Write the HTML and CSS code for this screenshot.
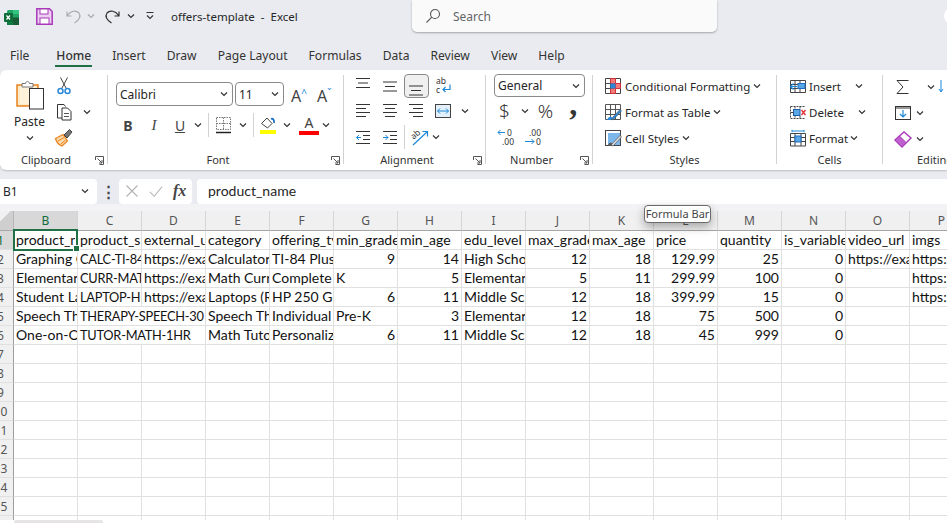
FILE: index.html
```html
<!DOCTYPE html>
<html lang="en">
<head>
    <meta charset="UTF-8">
    <meta name="viewport" content="width=device-width, initial-scale=1.0">
    <title>offers-template - Excel</title>
    <link rel="stylesheet" href="styles.css">
</head>
<body>
    <svg class="defs" aria-hidden="true">
        <symbol id="chev" viewBox="0 0 8 8"><path d="M1 2.500 4 5.500 7 2.500" fill="none" stroke="#333" stroke-width="1.200"/></symbol>
        <symbol id="launch" viewBox="0 0 9 9"><path d="M.5 4V.5H8.500V8.500H4.500M2.500 2.500 7 7M7 4V7H4" fill="none" stroke="#555"/></symbol>
    </svg>

    <!-- Title bar -->
    <header class="titlebar">
        <svg class="ic-excel" viewBox="0 0 15 15"><rect x="3" y="0" width="12" height="15" rx="1.500" fill="#21a366"/><rect x="9" y="0" width="6" height="4" fill="#33c481"/><rect x="9" y="7.500" width="6" height="7.500" fill="#185c37"/><rect x="3" y="8" width="6" height="7" fill="#107c41"/><rect x="0" y="3" width="9" height="9" rx="1" fill="#0f6b3a"/><path d="M2.500 5.500 6 9.500M6 5.500 2.500 9.500" stroke="#fff" stroke-width="1.200"/></svg>
        <svg class="ic-save" viewBox="0 0 17 17"><path d="M.8.8H13.500L16.200 3.500V16.200H.8Z" fill="#edcff2" stroke="#a83bb8" stroke-width="1.500"/><rect x="4" y="1" width="8" height="5" fill="#fff" stroke="#a83bb8"/><rect x="4" y="10" width="9" height="6" fill="#fff" stroke="#a83bb8"/></svg>
        <svg class="ic-undo" viewBox="0 0 16 16"><path d="M1 3.500V8H5.500M1.500 7.500C4 3 10 1.500 13 5 15.500 8.500 13 12 8.500 15" fill="none" stroke="#a9abb0" stroke-width="1.200"/></svg>
        <svg class="chev chev-off"><use href="#chev"/></svg>
        <svg class="ic-redo" viewBox="0 0 16 16"><path d="M15 3.500V8H10.500M14.500 7.500C12 3 6 1.500 3 5 .5 8.500 3 12 7.500 15" fill="none" stroke="#333" stroke-width="1.200"/></svg>
        <svg class="chev chev-redo"><use href="#chev"/></svg>
        <svg class="ic-qat" viewBox="0 0 10 10"><path d="M1.500 1.500H8.500M2 4.500 5 7.500 8 4.500" fill="none" stroke="#333" stroke-width="1.100"/></svg>
        <span class="doc-title">offers-template&nbsp; -&nbsp; Excel</span>
        <div class="search">
            <svg class="ic-search" viewBox="0 0 16 16"><circle cx="10" cy="6" r="4.500" fill="none" stroke="#555" stroke-width="1.100"/><path d="M6.800 9.200 1.500 14.500" stroke="#555" stroke-width="1.100"/></svg>
            <span>Search</span>
        </div>
        <span class="avatar"></span>
    </header>

    <!-- Tabs -->
    <nav class="tabs">
        <a href="#">File</a>
        <a href="#" class="active">Home</a>
        <a href="#">Insert</a>
        <a href="#">Draw</a>
        <a href="#">Page Layout</a>
        <a href="#">Formulas</a>
        <a href="#">Data</a>
        <a href="#">Review</a>
        <a href="#">View</a>
        <a href="#">Help</a>
    </nav>

    <!-- Ribbon -->
    <section class="ribbon">
        <div class="group clipboard">
            <div class="group-body clip-body">
                <div class="paste">
                    <svg class="ic-paste" viewBox="0 0 28 30"><path d="M1 5H22V26H1Z" fill="#fdebc8" stroke="#e8821e" stroke-width="1.500"/><path d="M4 6H19V24H4Z" fill="#fff3dc"/><path d="M6 7V3.500H9.500C10 .8 13 .8 13.500 3.500H17V7Z" fill="#fff" stroke="#777"/><rect x="13.500" y="8.500" width="14" height="20.500" fill="#fff" stroke="#333"/></svg>
                    <span>Paste</span>
                    <svg class="chev"><use href="#chev"/></svg>
                </div>
                <div class="mini">
                    <div class="row"><span class="t"><svg class="ic" viewBox="0 0 20 20"><path d="M6.500 1.500 12 12M13.500 1.500 8 12" stroke="#444" fill="none"/><circle cx="6.500" cy="15" r="2.500" fill="none" stroke="#2b88d8" stroke-width="1.500"/><circle cx="13.500" cy="15" r="2.500" fill="none" stroke="#2b88d8" stroke-width="1.500"/></svg></span></div>
                    <div class="row"><span class="t"><svg class="ic" viewBox="0 0 20 20"><path d="M8 16H3.500V2.500H10L11.500 4.500" fill="none" stroke="#333"/><path d="M8 6H13.500L17 9.500V18H8Z" fill="#fff" stroke="#333"/><path d="M10 11.500H15M10 14.500H15" stroke="#555"/></svg></span><svg class="chev chev-copy"><use href="#chev"/></svg></div>
                    <div class="row"><span class="t"><svg class="ic" viewBox="0 0 20 20"><path d="M1.500 10.500 9 6.500 13.500 13 8 18C5 17 2.500 14 1.500 10.500Z" fill="#fbd9a8" stroke="#e8821e" stroke-width="1.200"/><path d="M4 13 10 9.500M7 16 11.500 12" stroke="#e8821e"/><path d="M10 7 15.500 1.500 18 4 13 10Z" fill="#777" stroke="#444"/></svg></span></div>
                </div>
            </div>
            <div class="label launchable">Clipboard<svg class="launcher"><use href="#launch"/></svg></div>
        </div>
        <span class="sep"></span>

        <div class="group font">
            <div class="group-body font-body">
                <div class="row row-combo">
                    <div class="combo combo-font">Calibri<svg class="chev"><use href="#chev"/></svg></div>
                    <div class="combo combo-size">11<svg class="chev"><use href="#chev"/></svg></div>
                    <span class="grow">A<i>^</i></span>
                    <span class="grow shrink">A<i>ˇ</i></span>
                </div>
                <div class="row row-format">
                    <span class="t fmt bold">B</span>
                    <span class="t fmt italic">I</span>
                    <span class="t fmt under">U</span>
                    <svg class="chev chev-under"><use href="#chev"/></svg>
                    <span class="vsep"></span>
                    <span class="t"><svg class="ic" viewBox="0 0 20 20"><path d="M3.500 2.500H17.500V14.500H3.500ZM10.500 2.500V14.500M3.500 8.500H17.500" fill="none" stroke="#777" stroke-dasharray="1.500 1"/><path d="M3 17.500H18" stroke="#222" stroke-width="1.500"/></svg></span>
                    <svg class="chev chev-border"><use href="#chev"/></svg>
                    <span class="vsep vsep-fill"></span>
                    <span class="t"><svg class="ic" viewBox="0 0 20 20"><path d="M3.500 8.500 9 3 14 8.500 9.500 13Z" fill="#fff" stroke="#444"/><path d="M13 4C15 3 16.500 5 16 8" fill="none" stroke="#1e6fc4" stroke-width="1.800"/><rect x="2" y="15" width="16" height="4" fill="#ffff00"/></svg></span>
                    <svg class="chev chev-color"><use href="#chev"/></svg>
                    <span class="t color-a">A</span>
                    <svg class="chev chev-a"><use href="#chev"/></svg>
                </div>
            </div>
            <div class="label launchable">Font<svg class="launcher"><use href="#launch"/></svg></div>
        </div>
        <span class="sep"></span>

        <div class="group align">
            <div class="group-body align-body">
                <div class="row row-short">
                    <span class="t"><svg class="ic" viewBox="0 0 20 20"><path d="M3 2.500H17M5 7H15M3 11.500H17" stroke="#333" fill="none"/></svg></span>
                    <span class="t"><svg class="ic" viewBox="0 0 20 20"><path d="M3 6H17M5 10.500H15M3 15H17" stroke="#333" fill="none"/></svg></span>
                    <span class="t selected"><svg class="ic" viewBox="0 0 20 20"><path d="M3 10H17M5 14.500H15M3 19H17" stroke="#333" fill="none"/></svg></span>
                    <span class="t"><svg class="ic" viewBox="0 0 20 20"><text x="3" y="8" class="ic-text">ab</text><text x="3" y="17" class="ic-text">c</text><path d="M17 8.500V13.500H10M12.500 11 10 13.500 12.500 16" stroke="#1e88d8" stroke-width="1.200" fill="none"/></svg></span>
                </div>
                <div class="row row-mid">
                    <span class="t"><svg class="ic" viewBox="0 0 20 20"><path d="M3 3.500H17M3 7.500H13M3 11.500H17M3 15.500H13" stroke="#333" fill="none"/></svg></span>
                    <span class="t"><svg class="ic" viewBox="0 0 20 20"><path d="M3 3.500H17M5 7.500H15M3 11.500H17M5 15.500H15" stroke="#333" fill="none"/></svg></span>
                    <span class="t"><svg class="ic" viewBox="0 0 20 20"><path d="M3 3.500H17M7 7.500H17M3 11.500H17M7 15.500H17" stroke="#333" fill="none"/></svg></span>
                    <span class="t"><svg class="ic" viewBox="0 0 20 20"><rect x="2.500" y="3.500" width="15" height="13" fill="#e3f0fb" stroke="#444"/><path d="M4.500 10H15.500M7 7.500 4.500 10 7 12.500M13 7.500 15.500 10 13 12.500" stroke="#1e88d8" fill="none"/></svg></span>
                    <svg class="chev chev-merge"><use href="#chev"/></svg>
                </div>
                <div class="row">
                    <span class="t"><svg class="ic" viewBox="0 0 20 20"><path d="M3 4.500H17M10 8.500H17M10 12.500H17M3 16.500H17" stroke="#333" fill="none"/><path d="M8 10.500H3.500M6 8 3.500 10.500 6 13" stroke="#1e88d8" fill="none"/></svg></span>
                    <span class="t"><svg class="ic" viewBox="0 0 20 20"><path d="M3 4.500H17M10 8.500H17M10 12.500H17M3 16.500H17" stroke="#333" fill="none"/><path d="M3 10.500H8M5.500 8 8 10.500 5.500 13" stroke="#1e88d8" fill="none"/></svg></span>
                    <span class="vsep vsep-orient"></span>
                    <span class="t t-orient"><svg class="ic" viewBox="0 0 20 20"><text x="1" y="10" class="ic-text" transform="rotate(-40 6 8)">ab</text><path d="M3 18 17 5M12.500 4.500H17.500V9.500" stroke="#1e88d8" stroke-width="1.200" fill="none"/></svg></span>
                    <svg class="chev chev-orient"><use href="#chev"/></svg>
                </div>
            </div>
            <div class="label launchable">Alignment<svg class="launcher"><use href="#launch"/></svg></div>
        </div>
        <span class="sep"></span>

        <div class="group number">
            <div class="group-body align-body number-body">
                <div class="row row-short">
                    <div class="combo combo-num">General<svg class="chev"><use href="#chev"/></svg></div>
                </div>
                <div class="row row-mid">
                    <span class="sym dollar">$</span>
                    <svg class="chev"><use href="#chev"/></svg>
                    <span class="sym percent">%</span>
                    <span class="sym comma">,</span>
                </div>
                <div class="row">
                    <span class="t"><svg class="ic" viewBox="0 0 20 20"><text x="11" y="9" class="ic-num">0</text><text x="6" y="18" class="ic-num">.00</text><path d="M9 5.500H2M4.500 3 2 5.500 4.500 8" stroke="#1e88d8" fill="none"/></svg></span>
                    <span class="t"><svg class="ic" viewBox="0 0 20 20"><text x="6" y="9" class="ic-num">.00</text><text x="13" y="18" class="ic-num">0</text><path d="M2 14.500H11M8.500 12 11 14.500 8.500 17" stroke="#1e88d8" fill="none"/></svg></span>
                </div>
            </div>
            <div class="label launchable">Number<svg class="launcher"><use href="#launch"/></svg></div>
        </div>
        <span class="sep"></span>

        <div class="group styles">
            <div class="group-body list-body">
                <div class="row item">
                    <svg class="ic-list" viewBox="0 0 18 18"><path d="M1.500 1.500H16.500V16.500H1.500Z" fill="#fff" stroke="#444"/><path d="M6.500 1.500H11.500V6.500H6.500ZM11.500 6.500H16.500V11.500H11.500ZM6.500 11.500H11.500V16.500H6.500Z" fill="#f47a7a" stroke="#d13438"/><path d="M1.500 6.500H6.500M1.500 11.500H6.500M6.500 6.500V11.500" stroke="#444"/><rect x="6.500" y="6.500" width="5" height="5" fill="#2b88d8"/></svg>
                    <span>Conditional Formatting</span><svg class="chev"><use href="#chev"/></svg>
                </div>
                <div class="row item">
                    <svg class="ic-list" viewBox="0 0 18 18"><path d="M1.500 1.500H16.500V16.500H1.500ZM1.500 6.500H16.500M1.500 11.500H16.500M6.500 1.500V16.500M11.500 1.500V16.500" fill="#fff" stroke="#555"/><path d="M7 16 16 6.500 17.500 8 9 17Z" fill="#2b88d8" stroke="#555" stroke-width=".6"/><path d="M3 17C4 14 6 13 8 14L7 17Z" fill="#2b88d8"/></svg>
                    <span>Format as Table</span><svg class="chev"><use href="#chev"/></svg>
                </div>
                <div class="row item">
                    <svg class="ic-list" viewBox="0 0 18 18"><rect x="1.500" y="1.500" width="15" height="15" fill="#fff" stroke="#444"/><rect x="4" y="4" width="12" height="12" fill="#7db8ec"/><path d="M7 16 16 6.500 17.500 8 9 17Z" fill="#ddd" stroke="#555" stroke-width=".7"/><path d="M3.500 17C4.500 14 6 13 8 14L7 17Z" fill="#555"/></svg>
                    <span>Cell Styles</span><svg class="chev"><use href="#chev"/></svg>
                </div>
            </div>
            <div class="label">Styles</div>
        </div>
        <span class="sep"></span>

        <div class="group cells">
            <div class="group-body list-body cells-body">
                <div class="row item">
                    <svg class="ic-list" viewBox="0 0 18 18"><path d="M1.500 3.500H16.500V15.500H1.500ZM1.500 7.500H16.500M1.500 11.500H16.500M6 3.500V15.500M11 3.500V15.500" fill="#fff" stroke="#444"/><rect x="9" y="6.500" width="7" height="5" fill="#5aa7e6" stroke="#1e6fc4"/><path d="M8 9.500H1.500M4.500 6.500 1.500 9.500 4.500 12.500" stroke="#1e88d8" fill="none" stroke-width="1.200"/></svg>
                    <span>Insert</span><svg class="chev chev-insert"><use href="#chev"/></svg>
                </div>
                <div class="row item">
                    <svg class="ic-list" viewBox="0 0 18 18"><path d="M1.500 3.500H16.500M1.500 15.500H16.500M1.500 3.500V15.500M11 3.500V6M6 3.500V15.500M11 13V15.500" fill="none" stroke="#444" stroke-dasharray="2 1"/><rect x="4.500" y="6.500" width="6.500" height="6" fill="#5aa7e6" stroke="#1e5fa8"/><path d="M1.500 9.500H4.500" stroke="#444"/><path d="M12.500 7 16.500 12M16.500 7 12.500 12" stroke="#e0393e" stroke-width="1.500"/></svg>
                    <span>Delete</span><svg class="chev chev-delete"><use href="#chev"/></svg>
                </div>
                <div class="row item">
                    <svg class="ic-list" viewBox="0 0 18 18"><path d="M1.500 4.500H16.500V17H1.500ZM1.500 8.500H16.500M1.500 12.500H16.500M6 4.500V17M12 4.500V17" fill="#fff" stroke="#444"/><rect x="6" y="7" width="6" height="6" fill="#5aa7e6" stroke="#1e6fc4"/><path d="M3 2H15M3 .8V3.200M15 .8V3.200" stroke="#1e88d8"/></svg>
                    <span>Format</span><svg class="chev"><use href="#chev"/></svg>
                </div>
            </div>
            <div class="label">Cells</div>
        </div>
        <span class="sep"></span>

        <div class="group editing">
            <div class="group-body edit-body">
                <div class="row">
                    <span class="t"><svg class="ic" viewBox="0 0 20 20"><path d="M15.500 3.500H4L10 10 4 16.500H15.500" fill="none" stroke="#333"/></svg></span>
                    <svg class="chev chev-sum"><use href="#chev"/></svg>
                    <svg class="ic-next" viewBox="0 0 14 16"><path d="M3 1V13M1 10 3 13 5 10" fill="none" stroke="#1e88d8"/></svg>
                </div>
                <div class="row">
                    <span class="t"><svg class="ic" viewBox="0 0 20 20"><rect x="2.500" y="3.500" width="15" height="13" fill="#fff" stroke="#333"/><path d="M2.500 5H17.500" stroke="#333"/><path d="M10 7V14M7 11 10 14 13 11" fill="none" stroke="#1e88d8" stroke-width="1.200"/></svg></span>
                    <svg class="chev chev-fill"><use href="#chev"/></svg>
                </div>
                <div class="row">
                    <span class="t"><svg class="ic" viewBox="0 0 20 20"><path d="M2 11 11 3 18 9 9 18Z" fill="#fff" stroke="#a83bb8" stroke-width="1.400"/><path d="M2 11 6.500 7 13 13.500 9 18Z" fill="#c05fd0" stroke="#a83bb8"/></svg></span>
                    <svg class="chev chev-fill"><use href="#chev"/></svg>
                </div>
            </div>
            <div class="label label-edit">Editing</div>
        </div>
    </section>

    <!-- Formula bar -->
    <div class="formula-bar">
        <div class="name-box">B1<svg class="chev"><use href="#chev"/></svg></div>
        <span class="dots">⋮</span>
        <div class="fx-box">
            <svg class="ic-fx" viewBox="0 0 14 14"><path d="M1.500 1.500 12.500 12.500M12.500 1.500 1.500 12.500" stroke="#b5b5b5" stroke-width="1.200"/></svg>
            <svg class="ic-fx" viewBox="0 0 16 14"><path d="M1 8 6 13 15 2" fill="none" stroke="#b5b5b5" stroke-width="1.200"/></svg>
            <span class="fx">fx</span>
        </div>
        <div class="formula-input">product_name</div>
    </div>
    <div class="formula-gap"></div>

    <!-- Sheet -->
    <main class="sheet">
        <table class="grid">
            <thead>
                <tr>
                    <th class="corner"></th><th class="col current">B</th><th class="col">C</th><th class="col">D</th><th class="col">E</th><th class="col">F</th><th class="col">G</th><th class="col">H</th><th class="col">I</th><th class="col">J</th><th class="col">K</th><th class="col">L</th><th class="col">M</th><th class="col">N</th><th class="col">O</th><th class="col">P</th>
                </tr>
            </thead>
            <tbody>
                <tr><th class="current">1</th><td class="sel"><div class="clip">product_name</div></td><td>product_sku</td><td>external_url</td><td>category</td><td>offering_type</td><td>min_grade</td><td>min_age</td><td>edu_level</td><td>max_grade</td><td>max_age</td><td>price</td><td>quantity</td><td>is_variable</td><td>video_url</td><td>imgs</td></tr>
                <tr><th>2</th><td>Graphing Calculator</td><td class="caps">CALC-TI-84</td><td>https://example.com</td><td>Calculators</td><td>TI-84 Plus</td><td class="num">9</td><td class="num">14</td><td>High School</td><td class="num">12</td><td class="num">18</td><td class="num">129.99</td><td class="num">25</td><td class="num">0</td><td>https://example.com</td><td>https://example.com</td></tr>
                <tr><th>3</th><td>Elementary Math</td><td class="caps">CURR-MATH</td><td>https://example.com</td><td>Math Curriculum</td><td>Complete</td><td>K</td><td class="num">5</td><td>Elementary</td><td class="num">5</td><td class="num">11</td><td class="num">299.99</td><td class="num">100</td><td class="num">0</td><td></td><td>https://example.com</td></tr>
                <tr><th>4</th><td>Student Laptop</td><td class="caps">LAPTOP-HP</td><td>https://example.com</td><td>Laptops (Refurbished)</td><td>HP 250 G8</td><td class="num">6</td><td class="num">11</td><td>Middle School</td><td class="num">12</td><td class="num">18</td><td class="num">399.99</td><td class="num">15</td><td class="num">0</td><td></td><td>https://example.com</td></tr>
                <tr><th>5</th><td>Speech Therapy</td><td class="caps spill">THERAPY-SPEECH-30</td><td></td><td>Speech Therapy</td><td>Individual</td><td>Pre-K</td><td class="num">3</td><td>Elementary</td><td class="num">12</td><td class="num">18</td><td class="num">75</td><td class="num">500</td><td class="num">0</td><td></td><td></td></tr>
                <tr><th>6</th><td>One-on-One Tutoring</td><td class="caps spill">TUTOR-MATH-1HR</td><td></td><td>Math Tutoring</td><td>Personalized</td><td class="num">6</td><td class="num">11</td><td>Middle School</td><td class="num">12</td><td class="num">18</td><td class="num">45</td><td class="num">999</td><td class="num">0</td><td></td><td></td></tr>
                <tr><th>7</th><td></td><td></td><td></td><td></td><td></td><td></td><td></td><td></td><td></td><td></td><td></td><td></td><td></td><td></td><td></td></tr>
                <tr><th>8</th><td></td><td></td><td></td><td></td><td></td><td></td><td></td><td></td><td></td><td></td><td></td><td></td><td></td><td></td><td></td></tr>
                <tr><th>9</th><td></td><td></td><td></td><td></td><td></td><td></td><td></td><td></td><td></td><td></td><td></td><td></td><td></td><td></td><td></td></tr>
                <tr><th>10</th><td></td><td></td><td></td><td></td><td></td><td></td><td></td><td></td><td></td><td></td><td></td><td></td><td></td><td></td><td></td></tr>
                <tr><th>11</th><td></td><td></td><td></td><td></td><td></td><td></td><td></td><td></td><td></td><td></td><td></td><td></td><td></td><td></td><td></td></tr>
                <tr><th>12</th><td></td><td></td><td></td><td></td><td></td><td></td><td></td><td></td><td></td><td></td><td></td><td></td><td></td><td></td><td></td></tr>
                <tr><th>13</th><td></td><td></td><td></td><td></td><td></td><td></td><td></td><td></td><td></td><td></td><td></td><td></td><td></td><td></td><td></td></tr>
                <tr><th>14</th><td></td><td></td><td></td><td></td><td></td><td></td><td></td><td></td><td></td><td></td><td></td><td></td><td></td><td></td><td></td></tr>
                <tr><th>15</th><td></td><td></td><td></td><td></td><td></td><td></td><td></td><td></td><td></td><td></td><td></td><td></td><td></td><td></td><td></td></tr>
                <tr><th>16</th><td></td><td></td><td></td><td></td><td></td><td></td><td></td><td></td><td></td><td></td><td></td><td></td><td></td><td></td><td></td></tr>
            </tbody>
        </table>
    </main>
    <div class="sheet-tabs"><span class="thumb"></span></div>

    <div class="tooltip">Formula Bar</div>
</body>
</html>
```

FILE: styles.css
```css
:root {
    --chrome: #e9ebf0;
    --line: #e0e0e0;
    --head: #f0f0f0;
    --green: #1f7145;
    --text: #262626;
    --ui-font: "Noto Sans", "Open Sans", sans-serif;
    --cell-font: Lato, "Noto Sans", sans-serif;
}

* {
    margin: 0;
    padding: 0;
    box-sizing: border-box;
}

html, body {
    height: 523px;
    overflow: hidden;
}

body {
    display: flex;
    flex-direction: column;
    background-color: var(--chrome);
    color: var(--text);
    font-family: var(--ui-font);
    font-size: 12px;
}

.defs {
    display: none;
}

svg {
    flex: none;
    display: block;
}

.chev {
    width: 8px;
    height: 8px;
}

/* Title bar */
.titlebar {
    display: flex;
    align-items: flex-start;
    height: 40px;
    flex: none;
}

.ic-excel { width: 15px; height: 15px; margin: 10px 0 0 4px; }
.ic-save { width: 17px; height: 17px; margin: 8px 0 0 17px; }
.ic-undo { width: 16px; height: 16px; margin: 8px 0 0 13px; }
.chev-off { margin: 12px 0 0 5px; opacity: .35; }
.ic-redo { width: 16px; height: 16px; margin: 8px 0 0 9px; }
.chev-redo { margin: 12px 0 0 7px; }
.ic-qat { width: 10px; height: 10px; margin: 11px 0 0 10px; }

.doc-title {
    flex: none;
    margin: 8px 0 0 16px;
    font-size: 11.500px;
    line-height: 17px;
    white-space: nowrap;
    width: 241px;
}

.search {
    display: flex;
    align-items: center;
    flex: none;
    gap: 12px;
    width: 305px;
    height: 32px;
    padding-left: 13px;
    background-color: #fafafa;
    border-radius: 0 0 5px 5px;
    box-shadow: 0 1px 2px rgba(0,0,0,0.3);
    color: #666;
    font-size: 12px;
}

.ic-search { width: 16px; height: 16px; }

.avatar {
    width: 16px;
    height: 16px;
    margin: 8px 0 0 227px;
    background-color: #fff;
    border-radius: 50%;
    flex: none;
}

/* Tabs */
.tabs {
    display: flex;
    height: 30px;
    flex: none;
    padding-left: 10px;
    gap: 21px;
}

.tabs a {
    color: #333;
    text-decoration: none;
    font-size: 12.100px;
    line-height: 32px;
    height: 27px;
    white-space: nowrap;
}

.tabs a.active {
    margin-left: 5px;
    margin-right: -1px;
    font-weight: 500;
    border-bottom: 2px solid var(--green);
    padding: 0 1px;
}

/* Ribbon */
.ribbon {
    display: flex;
    height: 100px;
    flex: none;
    background-color: #fff;
    border-radius: 6px 0 0 6px;
    box-shadow: 0 1px 2px rgba(0,0,0,0.2);
}

.group {
    display: flex;
    flex-direction: column;
    flex: none;
}

.clipboard { width: 107px; }
.font { width: 235px; }
.align { width: 141px; }
.number { width: 106px; }
.styles { width: 183px; }
.cells { width: 105px; }
.editing { width: 110px; }

.sep {
    width: 1px;
    margin: 5px 0 6px;
    background-color: #d2d2d2;
    flex: none;
}

.group-body {
    height: 82px;
    padding-top: 4px;
}

.label {
    position: relative;
    height: 18px;
    line-height: 16px;
    font-size: 11px;
    text-align: center;
    color: #333;
}

.label.launchable {
    padding-right: 15px;
}

.label-edit {
    text-align: left;
    padding-left: 34px;
}

.launcher {
    position: absolute;
    right: 3px;
    top: 4px;
    width: 9px;
    height: 9px;
}

.row {
    display: flex;
    align-items: center;
    height: 26px;
}

.t {
    display: flex;
    align-items: center;
    justify-content: center;
    width: 26px;
    height: 24px;
    flex: none;
}

.ic {
    width: 20px;
    height: 20px;
}

.ic-text {
    font-family: var(--ui-font);
    font-size: 8.500px;
    fill: #333;
}

.ic-num {
    font-family: var(--ui-font);
    font-size: 8.500px;
    fill: #333;
}

.selected {
    background-color: #f0f0f0;
    border: 1px solid #8a8a8a;
    border-radius: 4px;
}

.vsep {
    width: 1px;
    height: 24px;
    margin: 0 1px 0 6px;
    background-color: #d2d2d2;
    flex: none;
}

/* Clipboard */
.clip-body {
    display: flex;
}

.paste {
    display: flex;
    flex-direction: column;
    align-items: center;
    width: 51px;
    padding: 6px 0 0 8px;
}

.ic-paste {
    width: 28px;
    height: 30px;
    margin-bottom: 2px;
}

.paste span {
    line-height: 20px;
    font-size: 12px;
}

.paste .chev {
    margin-top: 2px;
}

.mini {
    margin-top: -1px;
}

.chev-copy {
    margin-left: 6px;
}

/* Font */
.font-body {
    padding: 12px 0 0 8px;
}

.row-combo {
    height: 24px;
}

.row-format {
    margin-top: 6px;
    margin-left: -1px;
}

.combo {
    display: flex;
    align-items: center;
    justify-content: space-between;
    height: 24px;
    padding: 0 4px 0 3px;
    background-color: #fff;
    border: 1px solid #8a8a8a;
    border-radius: 4px;
    font-size: 12px;
}

.combo-font { width: 117px; }
.combo-size { width: 49px; margin-left: 2px; }
.combo-num { width: 91px; height: 23px; margin-left: 8px; }

.grow {
    position: relative;
    margin-left: 7px;
    width: 20px;
    font-size: 16px;
    color: #444;
    line-height: 20px;
}

.shrink {
    margin-left: 6px;
}

.grow i {
    font-style: normal;
    font-size: 10px;
    color: #2b88d8;
    vertical-align: 5px;
}

.fmt {
    font-size: 14px;
    color: #444;
}

.bold { font-weight: 700; font-family: var(--ui-font); }
.italic { font-style: italic; font-family: "Liberation Serif", serif; font-size: 15px; }
.under { text-decoration: underline; }

.chev-under { margin-left: 1px; }
.chev-border { margin-left: 3px; }
.vsep-fill { margin: 0 1px 0 6px; }
.chev-color { margin-left: 2px; }

.color-a {
    margin-left: 8px;
    color: #444;
    font-size: 14px;
    line-height: 15px;
    height: 20px;
    display: block;
    width: 20px;
    text-align: center;
    border-bottom: 4px solid #ff0000;
}

.chev-a { margin-left: 3px; }

/* Alignment, Number */
.align-body {
    padding: 4px 0 0 6px;
}

.align-body .t {
    width: 26.500px;
}

.align-body .selected {
    width: 24.500px;
    margin: 0 1px;
}

.number-body {
    padding-left: 0;
}

.row-short {
    height: 23px;
}

.row-mid {
    height: 27px;
}

.chev-merge { margin-left: 5px; }
.vsep-orient { margin: 0 0 0 1px; }
.t-orient { margin-left: 2px; }
.chev-orient { margin-left: -2px; }

.sym {
    line-height: 26px;
    color: #333;
}

.dollar { margin: 0 11px 0 13px; font-size: 19px; font-weight: 300; }
.percent { margin-left: 9px; font-size: 19px; font-weight: 300; }
.comma { margin: -14px 0 0 16px; font-family: "Liberation Serif", serif; font-weight: 700; font-size: 32px; }

.number-body .row:last-child {
    padding-left: 7px;
}

/* Styles, Cells */
.list-body {
    padding: 3px 0 0 11px;
}

.cells-body {
    padding-left: 12px;
}

.item {
    gap: 3px;
    white-space: nowrap;
    font-size: 11.500px;
}

.cells-body .item {
    gap: 2px;
}

.item .chev {
    margin-left: 0;
}

.ic-list {
    width: 18px;
    height: 18px;
}

.item .chev-insert { margin-left: 12px; }
.item .chev-delete { margin-left: 12px; }

/* Editing */
.edit-body {
    padding-left: 7px;
}

.chev-sum { margin-left: 11px; }
.chev-fill { margin-left: 0; }
.ic-next { width: 14px; height: 16px; margin-left: 3px; }

/* Formula bar */
.formula-bar {
    display: flex;
    align-items: center;
    height: 26px;
    margin-top: 8px;
    flex: none;
}

.name-box {
    display: flex;
    align-items: center;
    justify-content: space-between;
    width: 97px;
    height: 25px;
    padding: 0 8px 0 3px;
    background-color: #fff;
    border-radius: 0 4px 4px 0;
    font-size: 12px;
}

.dots {
    width: 22px;
    text-align: center;
    font-size: 15px;
    font-weight: 700;
    color: #444;
}

.fx-box {
    display: flex;
    align-items: center;
    gap: 10px;
    width: 73px;
    height: 25px;
    padding-left: 6px;
    background-color: #fff;
    border-radius: 4px;
}

.ic-fx {
    width: 14px;
    height: 14px;
}

.fx {
    font-family: "Liberation Serif", serif;
    font-style: italic;
    font-weight: 700;
    font-size: 16px;
    color: #444;
}

.formula-input {
    flex: 1;
    height: 25px;
    margin-left: 5px;
    padding-left: 11px;
    background-color: #fff;
    border-radius: 4px 0 0 4px;
    font-family: var(--cell-font);
    font-size: 14px;
    line-height: 23px;
}

.formula-gap {
    height: 7px;
    flex: none;
    background-color: #f3f3f5;
}

/* Sheet */
.sheet {
    flex: 1;
    overflow: hidden;
    background-color: #fff;
}

.grid {
    margin-left: -12px;
    width: 986px;
    table-layout: fixed;
    border-collapse: separate;
    border-spacing: 0;
    font-family: var(--cell-font);
    font-size: 14px;
    color: #111;
}

.grid th {
    height: 19px;
    width: 64px;
    padding: 0;
    background-color: var(--head);
    border-right: 1px solid #d4d4d4;
    border-bottom: 1px solid var(--line);
    font-family: var(--ui-font);
    font-size: 12px;
    font-weight: 400;
    color: #555;
    overflow: hidden;
}

.grid th.corner {
    width: 26px;
    background: linear-gradient(135deg, var(--head) 50%, #cfcfcf 50%);
    border-right-color: #b5b5b5;
    border-bottom: 1px solid #a6a6a6;
}

.grid th.col {
    height: 20px;
    border-bottom: 1px solid #a6a6a6;
}

.grid tbody th {
    border-right: 1px solid #9e9e9e;
}

.grid th.current {
    background-color: #d8d8d8;
    color: #0e6b3a;
}

.grid td {
    height: 19px;
    padding: 0 2px;
    line-height: 17px;
    vertical-align: top;
    border-right: 1px solid var(--line);
    border-bottom: 1px solid var(--line);
    white-space: nowrap;
    overflow: hidden;
}

.grid td.num {
    text-align: right;
}

.grid td.caps {
    font-size: 12.800px;
    line-height: 18px;
    letter-spacing: -0.250px;
}

.grid td.spill {
    overflow: visible;
    border-right: none;
}

.grid td.sel {
    position: relative;
    overflow: visible;
}

.clip {
    overflow: hidden;
}

/* green box round the active cell */
.sel::before {
    content: "";
    position: absolute;
    inset: -2px -1px -2px -1px;
    border: 2px solid var(--green);
}

.sel::after {
    content: "";
    position: absolute;
    right: -3px;
    bottom: -3px;
    width: 5px;
    height: 5px;
    background-color: var(--green);
    border: 1px solid #fff;
}

.sheet-tabs {
    height: 3px;
    flex: none;
    padding-left: 14px;
    background-color: #fff;
}

.thumb {
    display: block;
    width: 89px;
    height: 3px;
    background-color: #e6e4e4;
    border-radius: 2px 2px 0 0;
}

.tooltip {
    position: absolute;
    left: 644px;
    top: 205px;
    width: 67px;
    height: 18px;
    background-color: #fff;
    border: 1px solid #6b6b6b;
    border-radius: 4px;
    box-shadow: 0 4px 10px rgba(0,0,0,0.3);
    font-size: 11px;
    line-height: 16px;
    text-align: center;
    color: #444;
    white-space: nowrap;
}
```
